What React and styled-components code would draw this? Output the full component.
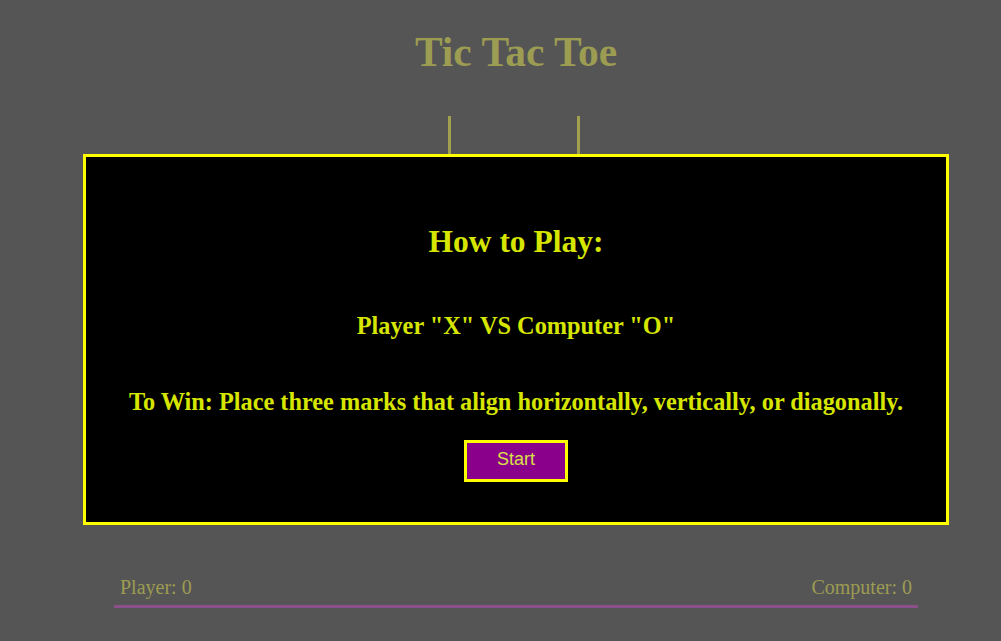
import React, { useState } from "react";
import styled, { createGlobalStyle } from "styled-components";

const GlobalStyle = createGlobalStyle`
  html, body {
    margin: 0;
    padding: 0;
    background: #555555;
  }
  body {
    font-family: "Liberation Serif", "Times New Roman", serif;
  }
`;

export default function App() {
  const [started, setStarted] = useState(false);
  const [board] = useState(Array(9).fill(""));

  return (
    <>
      <GlobalStyle />
      <StyledPage>
        <Title>Tic Tac Toe</Title>
        <Stage>
          <Board>
            {board.map((v, i) => (
              <Cell key={i} $col={i % 3} $row={Math.floor(i / 3)}>
                {v}
              </Cell>
            ))}
          </Board>
          {!started && (
            <Modal>
              <ModalTitle>How to Play:</ModalTitle>
              <Rule $top={52}>Player "X" VS Computer "O"</Rule>
              <Rule $top={48}>
                To Win: Place three marks that align horizontally, vertically,
                or diagonally.
              </Rule>
              <StartButton onClick={() => setStarted(true)}>Start</StartButton>
            </Modal>
          )}
        </Stage>
        <Score>
          <span>Player: 0</span>
          <span>Computer: 0</span>
        </Score>
      </StyledPage>
    </>
  );
}

const StyledPage = styled.div`
  width: 1001px;
  box-sizing: border-box;
  padding-left: 31px;
  display: flex;
  flex-direction: column;
  align-items: center;
`;

const Title = styled.h1`
  margin: 29px 0 0;
  height: 46px;
  line-height: 46px;
  font-size: 41.5px;
  font-weight: bold;
  color: #9c9c52;
`;

const Stage = styled.div`
  position: relative;
  margin-top: 41px;
  width: 970px;
  display: flex;
  justify-content: center;
`;

const Board = styled.div`
  display: grid;
  grid-template-columns: 126px 129px 129px;
  grid-template-rows: 126px 129px 129px;
  margin-left: -4px;
`;

const Cell = styled.div`
  border-left: ${(p) => (p.$col > 0 ? "3px solid #a0a04e" : "none")};
  border-top: ${(p) => (p.$row > 0 ? "3px solid #a0a04e" : "none")};
`;

const Modal = styled.div`
  position: absolute;
  top: 38px;
  left: 52px;
  width: 860px;
  height: 299px;
  padding-top: 66px;
  background: #000;
  border: 3px solid #ffff00;
  display: flex;
  flex-direction: column;
  align-items: center;
`;

const ModalTitle = styled.h2`
  margin: 0;
  font-size: 31.5px;
  line-height: 37px;
  font-weight: bold;
  color: #d6e600;
`;

const Rule = styled.p`
  margin: ${(p) => p.$top}px 0 0;
  font-size: 24.3px;
  line-height: 28px;
  font-weight: bold;
  color: #d6e600;
  text-align: center;
`;

const StartButton = styled.button`
  margin-top: 24px;
  width: 104px;
  height: 42px;
  background: #8b008b;
  border: 3px solid #ffff00;
  color: #d8e048;
  font-family: "Liberation Sans", Arial, sans-serif;
  font-size: 18px;
  line-height: 20px;
  padding: 0 0 4px;
  cursor: pointer;
`;

const Score = styled.div`
  margin-top: 76px;
  width: 804px;
  box-sizing: border-box;
  padding: 0 6px 6px;
  display: flex;
  justify-content: space-between;
  border-bottom: 3px solid #8b4f8b;
  font-size: 20px;
  line-height: 23px;
  color: #9c9c52;
`;
